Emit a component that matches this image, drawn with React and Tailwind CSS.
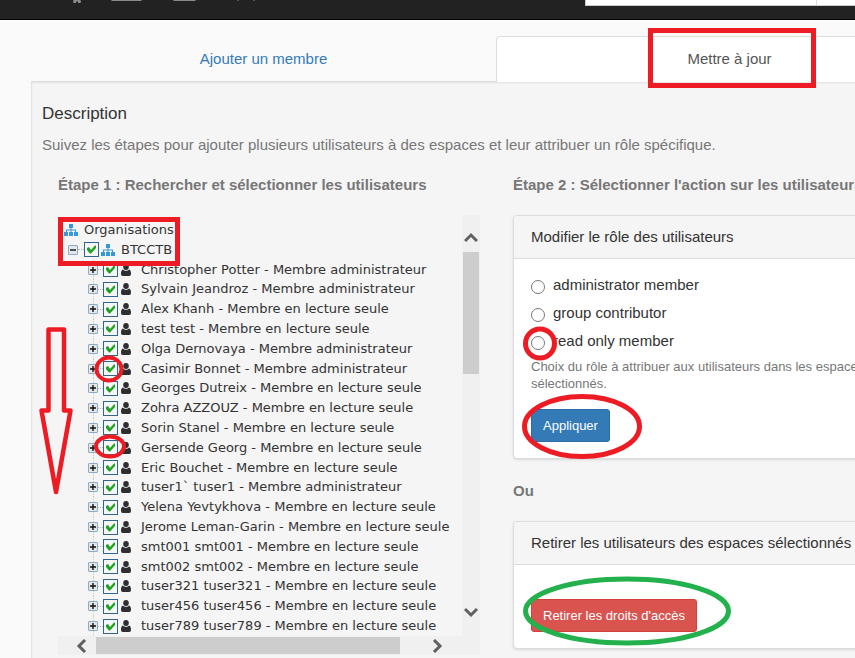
import React from "react";

const members = [
  "Christopher Potter - Membre administrateur",
  "Sylvain Jeandroz - Membre administrateur",
  "Alex Khanh - Membre en lecture seule",
  "test test - Membre en lecture seule",
  "Olga Dernovaya - Membre administrateur",
  "Casimir Bonnet - Membre administrateur",
  "Georges Dutreix - Membre en lecture seule",
  "Zohra AZZOUZ - Membre en lecture seule",
  "Sorin Stanel - Membre en lecture seule",
  "Gersende Georg - Membre en lecture seule",
  "Eric Bouchet - Membre en lecture seule",
  "tuser1` tuser1 - Membre administrateur",
  "Yelena Yevtykhova - Membre en lecture seule",
  "Jerome Leman-Garin - Membre en lecture seule",
  "smt001 smt001 - Membre en lecture seule",
  "smt002 smt002 - Membre en lecture seule",
  "tuser321 tuser321 - Membre en lecture seule",
  "tuser456 tuser456 - Membre en lecture seule",
  "tuser789 tuser789 - Membre en lecture seule",
];

const roles = ["administrator member", "group contributor", "read only member"];

function OrgIcon() {
  return (
    <svg className="h-3 w-[14px] shrink-0" viewBox="0 0 14 12" fill="#3498db" aria-hidden="true">
      <path d="M5 0h4v4H7.500v1.500H12V8h2v4h-4V8h1V6.500H7.500V8H9v4H5V8h1.500V6.500H3V8h1v4H0V8h2V5.500h4.500V4H5z" />
    </svg>
  );
}

function PersonIcon() {
  return (
    <svg className="h-3 w-[10px] shrink-0" viewBox="0 0 10 12" fill="#2e2e30" aria-hidden="true">
      <ellipse cx="5" cy="3" rx="2.800" ry="3" />
      <path d="M2 5.400C.5 5.900 0 7.500 0 9.500 0 11.200.6 12 1.800 12h6.400C9.400 12 10 11.200 10 9.500c0-2-.5-3.600-2-4.100C7.400 6.300 6.300 6.700 5 6.700s-2.400-.4-3-1.300z" />
    </svg>
  );
}

function Expander({ open, label }) {
  return (
    <button
      type="button"
      aria-label={label}
      className="flex h-[10px] w-[10px] shrink-0 items-center justify-center rounded-[1px] border border-[#8fabc4] bg-[#e4e6e8]"
    >
      <svg className="h-[6px] w-[6px]" viewBox="0 0 6 6" stroke="#111" strokeWidth="1.400">
        <path d={open ? "M0 3h6" : "M0 3h6M3 0v6"} />
      </svg>
    </button>
  );
}

function Check({ id }) {
  return (
    <span className="relative h-[15px] w-[15px] shrink-0">
      <input
        id={id}
        type="checkbox"
        defaultChecked
        className="block h-[15px] w-[15px] appearance-none border border-[#33648f] bg-[#f4f6f8]"
      />
      <svg
        className="pointer-events-none absolute inset-0 h-[15px] w-[15px]"
        viewBox="0 0 15 15"
        fill="#21a121"
        aria-hidden="true"
      >
        <path d="M3 6l2-1 2 3 4-4.500h1V6l-5 5.500H6L3 8z" />
      </svg>
    </span>
  );
}

function Tree() {
  return (
    <ul className="grid h-[416px] auto-rows-fr whitespace-nowrap font-['DejaVu_Sans',Verdana,sans-serif] text-[13px] leading-5 text-[#333]">
      <li className="flex items-center gap-[6px] pl-[6px]">
        <OrgIcon />
        <span>Organisations</span>
      </li>
      <li className="flex items-center pl-[10px]">
        <Expander open label="Réduire BTCCTB" />
        <span className="w-[6px] border-t border-dotted border-[#bbb]" />
        <Check id="org" />
        <label htmlFor="org" className="flex items-center gap-[6px] pl-[2px]">
          <OrgIcon />
          BTCCTB
        </label>
      </li>
      {members.map((m, i) => (
        <li key={m} className="flex items-center pl-[30px]">
          <span className="flex w-[10px] shrink-0 flex-col items-center self-stretch">
            <span className="flex-1 border-l border-dotted border-[#ccc]" />
            <Expander label={"Développer " + m} />
            <span className="flex-1 border-l border-dotted border-[#ccc]" />
          </span>
          <span className="w-[5px] border-t border-dotted border-[#bbb]" />
          <Check id={"member-" + i} />
          <label htmlFor={"member-" + i} className="flex items-center gap-[10px] pl-[3px]">
            <PersonIcon />
            {m}
          </label>
        </li>
      ))}
    </ul>
  );
}

function Chevron({ d, className }) {
  return (
    <svg className={className} viewBox="0 0 14 14" fill="none" stroke="#606060" strokeWidth="3" aria-hidden="true">
      <path d={d} />
    </svg>
  );
}

function UserPicker() {
  return (
    <div className="mr-px mt-5">
      <div className="flex">
        <div className="min-w-0 flex-1 overflow-hidden pt-[5px]">
          <Tree />
        </div>
        <div className="flex w-[18px] shrink-0 flex-col items-center bg-[#f0f0f0] pb-[17px] pt-4">
          <Chevron className="h-[14px] w-[14px]" d="M1 10l6-6 6 6" />
          <div className="mt-[7px] h-[122px] w-4 bg-[#cdcdcd]" />
          <Chevron className="mt-auto h-[14px] w-[14px]" d="M1 4l6 6 6-6" />
        </div>
      </div>
      <div className="flex h-[19px] items-center bg-[#f0f0f0] pl-[17px] pr-9">
        <Chevron className="h-[14px] w-[14px]" d="M10 1L4 7l6 6" />
        <div className="ml-[7px] h-[17px] w-[304px] bg-[#cdcdcd]" />
        <Chevron className="ml-auto h-[14px] w-[14px]" d="M4 1l6 6-6 6" />
      </div>
    </div>
  );
}

function Panel({ title, children, className }) {
  return (
    <section className={"rounded border border-[#ddd] bg-white shadow-sm " + className}>
      <h3 className="rounded-t border-b border-[#ddd] bg-[#f5f5f5] px-[17px] py-[11px] text-[15px] leading-5 text-[#333]">
        {title}
      </h3>
      <div className="px-[17px]">{children}</div>
    </section>
  );
}

function Annotations() {
  return (
    <svg
      className="pointer-events-none absolute left-0 top-0 h-[658px] w-[855px]"
      viewBox="0 0 855 658"
      fill="none"
      stroke="#ed1c24"
      strokeWidth="5"
      aria-hidden="true"
    >
      <rect x="650.500" y="30.500" width="163" height="55" />
      <rect x="60.500" y="219.500" width="117" height="44" />
      <path strokeWidth="4.500" strokeLinejoin="round" d="M48.500 329.500h15.500v81h6.500L56 492 41.500 410.500h7z" />
      <ellipse cx="109" cy="369" rx="12.500" ry="11.500" strokeWidth="4" />
      <ellipse cx="110" cy="446.500" rx="14" ry="10" strokeWidth="4" />
      <ellipse cx="540" cy="343.500" rx="14.500" ry="14.500" />
      <ellipse cx="582" cy="426.500" rx="57.500" ry="30" />
      <ellipse cx="627" cy="611" rx="101.500" ry="32" stroke="#22b14c" />
    </svg>
  );
}

export default function App() {
  return (
    <div className="relative h-screen overflow-hidden bg-[#fafafa] font-['Liberation_Sans',Arial,sans-serif] text-[15px] text-[#777]">
      <header className="flex h-5 items-start border-b border-black bg-[#222]">
        <svg className="h-1 w-[585px] shrink-0" viewBox="0 0 585 4" fill="#8a8a8a" aria-hidden="true">
          <path d="M74 0h6l1 1v1l-1 1h-2V2l-1-1-1 1v1h-2l-1-1V1zM111 0h31l-1 1h-29zM173 0h23l-1 1h-21z" />
          <path fill="#555" d="M237 0h2v1h-2zM253 0h2v1h-2z" />
        </svg>
        <div className="flex h-[6px] flex-1 border-b border-l border-[#ccc] bg-white">
          <span className="w-[231px] border-r border-[#ddd]" />
        </div>
      </header>

      <main className="ml-[31px] min-w-[932px] pt-4">
        <nav className="flex text-center leading-5">
          <a href="#ajouter" className="flex-1 border-b border-[#ddd] pb-3 pt-[13px] text-[#337ab7]">
            Ajouter un membre
          </a>
          <a
            href="#mettre-a-jour"
            className="flex-1 rounded-t border border-b-0 border-[#ddd] bg-white py-3 text-[#555]"
          >
            Mettre à jour
          </a>
        </nav>

        <div className="border border-t-0 border-[#e3e3e3] bg-[#f5f5f5] px-[10px] pb-10 pt-5 shadow-[inset_0_1px_2px_rgba(0,0,0,0.08)]">
          <h1 className="text-[17px] leading-6 text-[#333]">Description</h1>
          <p className="mt-[9px] leading-5">
            Suivez les étapes pour ajouter plusieurs utilisateurs à des espaces et leur attribuer un rôle spécifique.
          </p>

          <div className="mt-5 grid grid-cols-2">
            <div className="px-4">
              <h2 className="font-bold leading-5">Étape 1 : Rechercher et sélectionner les utilisateurs</h2>
              <UserPicker />
            </div>

            <div className="px-4">
              <h2 className="font-bold leading-5">Étape 2 : Sélectionner l'action sur les utilisateurs</h2>
              <Panel title="Modifier le rôle des utilisateurs" className="mt-5 pb-4">
                <fieldset className="pt-[13px]">
                  {roles.map((r) => (
                    <label key={r} className="flex h-7 items-start gap-2 leading-[26px] text-[#333]">
                      <input
                        type="radio"
                        name="role"
                        className="mt-2 h-[14px] w-[14px] shrink-0 appearance-none rounded-full border border-[#777] bg-white"
                      />
                      {r}
                    </label>
                  ))}
                </fieldset>
                <p className="mt-[2px] text-[13px] leading-[17px] text-[#777]">
                  Choix du rôle à attribuer aux utilisateurs dans les espaces sélectionnés.
                </p>
                <button
                  type="button"
                  className="mt-[17px] h-[33px] rounded-[3px] border border-[#2e6da4] bg-[#337ab7] px-[11px] text-[13px] text-white"
                >
                  Appliquer
                </button>
              </Panel>

              <h2 className="mt-[22px] font-bold leading-5">Ou</h2>

              <Panel title="Retirer les utilisateurs des espaces sélectionnés" className="mt-5 pb-4">
                <button
                  type="button"
                  className="mt-[34px] h-[33px] rounded-[3px] border border-[#d43f3a] bg-[#d9534f] px-[11px] text-[13px] text-white"
                >
                  Retirer les droits d'accès
                </button>
              </Panel>
            </div>
          </div>
        </div>
      </main>

      <Annotations />
    </div>
  );
}
